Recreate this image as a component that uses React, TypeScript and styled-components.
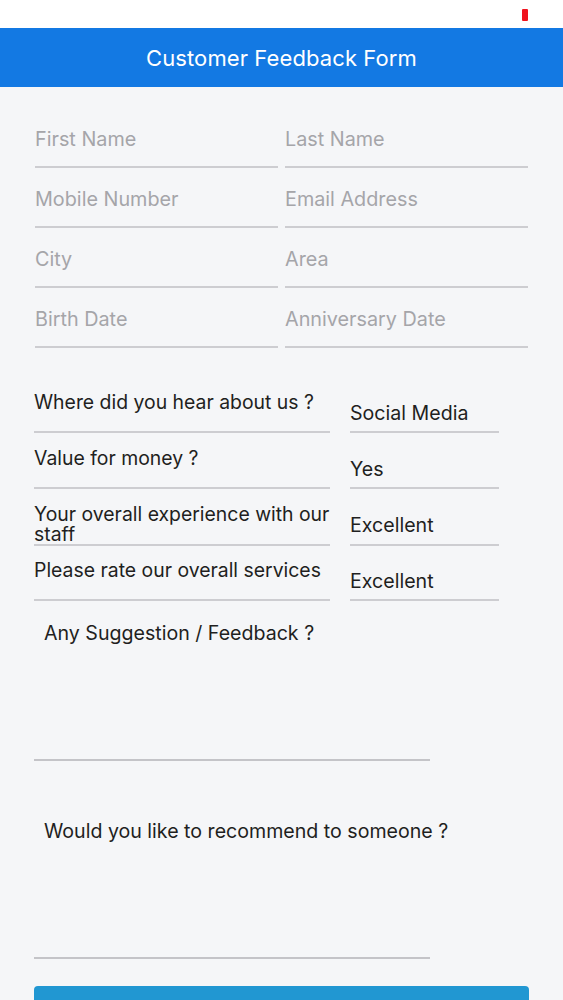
import React from 'react';
import styled, { createGlobalStyle } from 'styled-components';

const GlobalStyle = createGlobalStyle`
  body {
    margin: 0;
    background-color: #f5f6f8;
    font-family: Inter, "Noto Sans", "Liberation Sans", sans-serif;
  }
`;

const StatusBar = styled.div`
  height: 28px;
  background-color: #ffffff;
  display: flex;
  justify-content: flex-end;
  align-items: flex-start;
  padding: 9px 35px 0 0;
  box-sizing: border-box;
`;

const Battery = styled.div`
  width: 6px;
  height: 12px;
  border-radius: 1px;
  background-color: #f0131e;
`;

const Header = styled.header`
  height: 59px;
  background-color: #1379e3;
  display: flex;
  align-items: center;
  justify-content: center;
  color: #ffffff;
  font-size: 22px;
  letter-spacing: 0.1px;
`;

const Form = styled.div`
  padding: 21px 35px 0 34px;
`;

const NameGrid = styled.div`
  display: grid;
  grid-template-columns: 243px 243px;
  column-gap: 7px;
  padding-left: 1px;
`;

const Field = styled.div`
  height: 60px;
  box-sizing: border-box;
  padding-top: 19px;
  border-bottom: 2px solid #cdcdd1;
  color: #a5a5a9;
  font-size: 19.8px;
  line-height: 24px;
`;

const Questions = styled.div`
  margin-top: 29px;
  display: flex;
  flex-direction: column;
`;

const QuestionRow = styled.div`
  display: grid;
  grid-template-columns: 296px 149px;
  column-gap: 20px;
  height: 56px;
`;

const Label = styled.div`
  box-sizing: border-box;
  padding-top: 15px;
  border-bottom: 2px solid #cdcdd1;
  color: #1f1f21;
  font-size: 19.4px;
  line-height: 20px;
`;

const Value = styled(Label)`
  padding-top: 26px;
  font-size: 19.6px;
`;

const TextBlock = styled.div<{ $gap: number }>`
  margin-top: ${(p) => p.$gap}px;
  width: 396px;
  height: 138px;
  box-sizing: border-box;
  padding-left: 10px;
  border-bottom: 2px solid #c4c4c8;
  color: #1f1f21;
  font-size: 19.6px;
  line-height: 20px;
  white-space: nowrap;
`;

const SubmitButton = styled.button`
  display: block;
  margin-top: 27px;
  width: 495px;
  height: 48px;
  border: none;
  border-radius: 4px;
  background-color: #2197d2;
`;

const questions = [
  { label: 'Where did you hear about us ?', value: 'Social Media' },
  { label: 'Value for money ?', value: 'Yes' },
  { label: 'Your overall experience with our staff', value: 'Excellent' },
  { label: 'Please rate our overall services', value: 'Excellent' },
];

const fields = [
  'First Name',
  'Last Name',
  'Mobile Number',
  'Email Address',
  'City',
  'Area',
  'Birth Date',
  'Anniversary Date',
];

function App() {
  return (
    <>
      <GlobalStyle />
      <StatusBar>
        <Battery />
      </StatusBar>
      <Header>Customer Feedback Form</Header>
      <Form>
        <NameGrid>
          {fields.map((f) => (
            <Field key={f}>{f}</Field>
          ))}
        </NameGrid>
        <Questions>
          {questions.map((q) => (
            <QuestionRow key={q.label}>
              <Label>{q.label}</Label>
              <Value>{q.value}</Value>
            </QuestionRow>
          ))}
        </Questions>
        <TextBlock $gap={22}>Any Suggestion / Feedback ?</TextBlock>
        <TextBlock $gap={60}>Would you like to recommend to someone ?</TextBlock>
        <SubmitButton aria-label="Submit" />
      </Form>
    </>
  );
}

export default App;
